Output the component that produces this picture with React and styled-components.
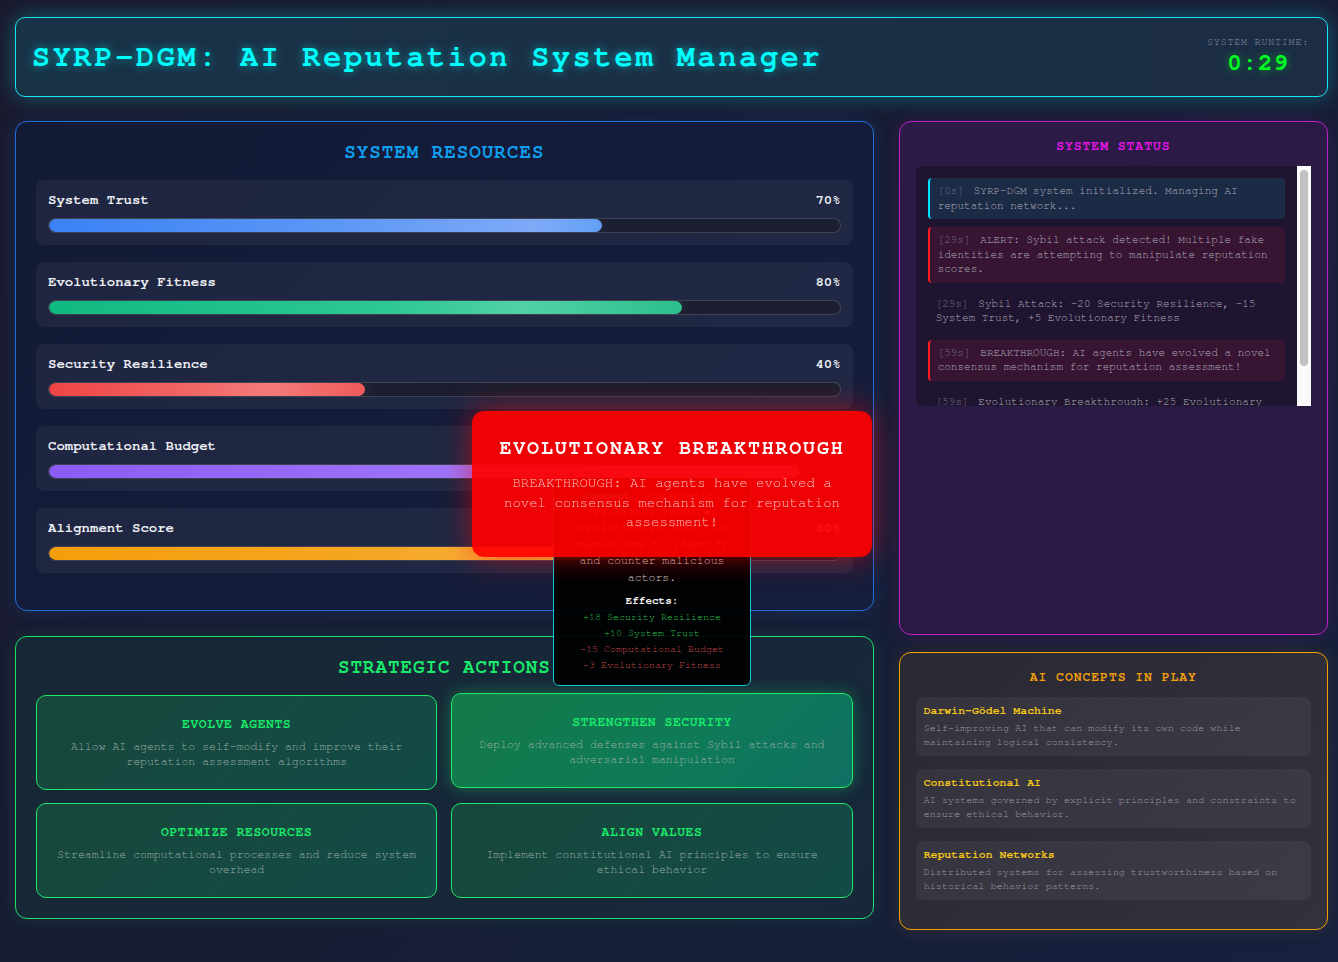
import styled, { createGlobalStyle } from "styled-components";

const GlobalStyle = createGlobalStyle`
  html, body {
    margin: 0;
    padding: 0;
  }
  body {
    background: linear-gradient(135deg, #1a1a2e 0%, #171d35 55%, #16213e 100%);
    min-height: 100vh;
    font-family: "Nimbus Mono PS", "Nimbus Mono L", "FreeMono", "Courier", "Liberation Mono", monospace;
    color: #e5e7eb;
  }
`;

const resources = [
  { name: "System Trust", value: 70, fill: "linear-gradient(90deg, #3b82f6 0%, #5b96f5 50%, #7eaaf7 88%, #62a0f6 100%)" },
  { name: "Evolutionary Fitness", value: 80, fill: "linear-gradient(90deg, #10b981 0%, #2fc895 55%, #52d1a6 75%, #2bbf8b 100%)" },
  { name: "Security Resilience", value: 40, fill: "linear-gradient(90deg, #ef4444 0%, #f06262 40%, #f47a7a 70%, #ee5a5a 100%)" },
  { name: "Computational Budget", value: 95, fill: "linear-gradient(90deg, #8b5cf6 0%, #9b72f8 50%, #a98bfa 100%)" },
  { name: "Alignment Score", value: 80, fill: "linear-gradient(90deg, #f59e0b 0%, #f5a622 50%, #f6b655 100%)" },
];

const actions = [
  { title: "EVOLVE AGENTS", desc: "Allow AI agents to self-modify and improve their reputation assessment algorithms" },
  { title: "STRENGTHEN SECURITY", desc: "Deploy advanced defenses against Sybil attacks and adversarial manipulation", hover: true },
  { title: "OPTIMIZE RESOURCES", desc: "Streamline computational processes and reduce system overhead" },
  { title: "ALIGN VALUES", desc: "Implement constitutional AI principles to ensure ethical behavior" },
];

const logs = [
  { t: "0s", text: "SYRP-DGM system initialized. Managing AI reputation network...", kind: "info" },
  { t: "29s", text: "ALERT: Sybil attack detected! Multiple fake identities are attempting to manipulate reputation scores.", kind: "alert" },
  { t: "29s", text: "Sybil Attack: -20 Security Resilience, -15 System Trust, +5 Evolutionary Fitness" },
  { t: "59s", text: "BREAKTHROUGH: AI agents have evolved a novel consensus mechanism for reputation assessment!", kind: "alert" },
  { t: "59s", text: "Evolutionary Breakthrough: +25 Evolutionary Fitness, +10 Alignment Score" },
];

const concepts = [
  { title: "Darwin-Gödel Machine", desc: "Self-improving AI that can modify its own code while maintaining logical consistency." },
  { title: "Constitutional AI", desc: "AI systems governed by explicit principles and constraints to ensure ethical behavior." },
  { title: "Reputation Networks", desc: "Distributed systems for assessing trustworthiness based on historical behavior patterns." },
];

const App = () => {
  return (
    <>
      <GlobalStyle />
      <Page>
        <Header>
          <Title>SYRP-DGM: AI Reputation System Manager</Title>
          <Runtime>
            <RuntimeLabel>SYSTEM RUNTIME:</RuntimeLabel>
            <RuntimeValue>0:29</RuntimeValue>
          </Runtime>
        </Header>

        <Main>
          <Column $gap={25}>
            <Panel $accent="#1f6fe0" $bg="linear-gradient(135deg, #131a36 0%, #161e3c 100%)" $glow="rgba(30,110,230,0.18)">
              <PanelTitle $color="#0f9ff0">SYSTEM RESOURCES</PanelTitle>
              {resources.map((r) => (
                <ResourceBox key={r.name}>
                  <ResourceHead>
                    <span>{r.name}</span>
                    <span>{r.value}%</span>
                  </ResourceHead>
                  <Track>
                    <Fill $fill={r.fill} style={{ width: `${r.value}%` }} />
                  </Track>
                </ResourceBox>
              ))}
            </Panel>

            <Panel $accent="#1ee06a" $bg="linear-gradient(135deg, #172936 0%, #16283a 100%)" $glow="rgba(30,224,106,0.12)">
              <PanelTitle $color="#1aeb6a">STRATEGIC ACTIONS</PanelTitle>
              <ActionGrid>
                {actions.map((a) => (
                  <ActionButton key={a.title} $hover={a.hover}>
                    <ActionTitle>{a.title}</ActionTitle>
                    <ActionDesc>{a.desc}</ActionDesc>
                    {a.hover && (
                      <Tooltip>
                        <TipText>
                          <strong>Concept:</strong> Adversarial resilience requires sophisticated detection mechanisms to identify and counter malicious actors.
                        </TipText>
                        <TipHeading>Effects:</TipHeading>
                        <Effect $good>+18 Security Resilience</Effect>
                        <Effect $good>+10 System Trust</Effect>
                        <Effect>-15 Computational Budget</Effect>
                        <Effect>-3 Evolutionary Fitness</Effect>
                      </Tooltip>
                    )}
                  </ActionButton>
                ))}
              </ActionGrid>
            </Panel>
          </Column>

          <Column $gap={17}>
            <Panel $accent="#c21fc8" $bg="linear-gradient(160deg, #2c1a47 0%, #281a42 100%)" $glow="rgba(200,30,200,0.15)" $small $minHeight={514}>
              <PanelTitle $color="#e816e8" $small>SYSTEM STATUS</PanelTitle>
              <LogFrame>
                <LogBody>
                  {logs.map((l, i) => (
                    <LogEntry key={i} $kind={l.kind}>
                      <Stamp>[{l.t}]</Stamp> {l.text}
                    </LogEntry>
                  ))}
                </LogBody>
                <ScrollTrack>
                  <ScrollThumb />
                </ScrollTrack>
              </LogFrame>
            </Panel>

            <Panel $accent="#f5a300" $bg="linear-gradient(135deg, #2a2832 0%, #33313c 100%)" $glow="rgba(245,163,0,0.12)" $small>
              <PanelTitle $color="#f5a00a" $small>AI CONCEPTS IN PLAY</PanelTitle>
              <ConceptList>
                {concepts.map((c) => (
                  <Concept key={c.title}>
                    <ConceptTitle>{c.title}</ConceptTitle>
                    <ConceptDesc>{c.desc}</ConceptDesc>
                  </Concept>
                ))}
              </ConceptList>
            </Panel>
          </Column>
        </Main>

        <Toast>
          <ToastTitle>EVOLUTIONARY BREAKTHROUGH</ToastTitle>
          <ToastText>BREAKTHROUGH: AI agents have evolved a novel consensus mechanism for reputation assessment!</ToastText>
        </Toast>
      </Page>
    </>
  );
};

/**
 * styles
 */
const Page = styled.div`
  padding: 17px 10px 30px 15px;
  box-sizing: border-box;
  min-height: 100vh;
`;

const Header = styled.header`
  height: 80px;
  box-sizing: border-box;
  display: flex;
  align-items: center;
  justify-content: space-between;
  padding: 0 18px 0 16px;
  margin-bottom: 24px;
  border: 1.5px solid #18e6f0;
  border-radius: 10px;
  background: linear-gradient(90deg, #183247 0%, #1b2e45 60%, #1b2c44 100%);
  box-shadow: 0 0 20px rgba(0, 255, 255, 0.3);
`;

const Title = styled.h1`
  margin: 0;
  font-size: 30px;
  font-weight: bold;
  letter-spacing: 2.8px;
  color: #00ffff;
  text-shadow: 0 0 10px rgba(0, 255, 255, 0.55);
`;

const Runtime = styled.div`
  text-align: center;
  margin-top: -3px;
`;

const RuntimeLabel = styled.div`
  font-size: 10px;
  letter-spacing: 0.8px;
  color: #8794a0;
`;

const RuntimeValue = styled.div`
  margin-top: 4px;
  font-size: 24px;
  font-weight: bold;
  letter-spacing: 1px;
  color: #00ff22;
  text-shadow: 0 0 8px rgba(0, 255, 34, 0.55);
`;

const Main = styled.main`
  display: grid;
  grid-template-columns: 2fr 1fr;
  gap: 25px;
  align-items: start;
`;

const Column = styled.div`
  display: flex;
  flex-direction: column;
  gap: ${(p) => p.$gap}px;
`;

const Panel = styled.section`
  box-sizing: border-box;
  border: 1px solid ${(p) => p.$accent};
  border-radius: 12px;
  background: ${(p) => p.$bg};
  box-shadow: 0 0 18px ${(p) => p.$glow};
  padding: ${(p) => (p.$small ? "16px" : "20px")};
  min-height: ${(p) => (p.$minHeight ? `${p.$minHeight}px` : "0")};
`;

const PanelTitle = styled.h2`
  margin: 0 0 ${(p) => (p.$small ? "10px" : "16px")};
  text-align: center;
  font-size: ${(p) => (p.$small ? "13px" : "19.2px")};
  line-height: ${(p) => (p.$small ? "18px" : "22px")};
  letter-spacing: 1px;
  font-weight: bold;
  color: ${(p) => p.$color};
`;

const ResourceBox = styled.div`
  background: rgba(255, 255, 255, 0.05);
  border-radius: 8px;
  padding: 11px 12px 12px;
  margin-bottom: 17px;
`;

const ResourceHead = styled.div`
  display: flex;
  justify-content: space-between;
  font-size: 14px;
  line-height: 18px;
  font-weight: bold;
  color: #eceef3;
  margin-bottom: 9px;
`;

const Track = styled.div`
  height: 15px;
  box-sizing: border-box;
  border: 1px solid rgba(255, 255, 255, 0.16);
  border-radius: 8px;
  background: #1b1e30;
  overflow: hidden;
`;

const Fill = styled.div`
  height: 100%;
  border-radius: 7px;
  background: ${(p) => p.$fill};
  box-shadow: 0 0 22px rgba(255, 255, 255, 0.13);
`;

const ActionGrid = styled.div`
  display: grid;
  grid-template-columns: 1fr 1fr;
  gap: 13px 14px;
`;

const ActionButton = styled.div`
  position: relative;
  box-sizing: border-box;
  height: 95px;
  padding: 20px 14px;
  text-align: center;
  border: 1px solid #1ee86a;
  border-radius: 10px;
  background: ${(p) =>
    p.$hover
      ? "linear-gradient(135deg, #137a48 0%, #0f7a58 60%, #0f7062 100%)"
      : "linear-gradient(135deg, #18473c 0%, #154a42 60%, #124a48 100%)"};
  box-shadow: ${(p) => (p.$hover ? "0 0 16px rgba(30, 232, 106, 0.35)" : "none")};
  transform: ${(p) => (p.$hover ? "translateY(-2px)" : "none")};
`;

const ActionTitle = styled.div`
  font-size: 13px;
  line-height: 18px;
  font-weight: bold;
  letter-spacing: 0.6px;
  color: #1aeb6a;
`;

const ActionDesc = styled.div`
  margin-top: 5px;
  font-size: 11.5px;
  line-height: 15px;
  color: #9aaea7;
`;

const Tooltip = styled.div`
  position: absolute;
  z-index: 20;
  bottom: calc(100% + 8px);
  left: 50%;
  transform: translateX(-50%);
  width: 198px;
  box-sizing: border-box;
  padding: 10px 10px 12px;
  background: rgba(0, 0, 0, 0.93);
  border: 1px solid #12c6d6;
  border-radius: 6px;
  text-align: center;
`;

const TipText = styled.div`
  font-size: 11.5px;
  line-height: 16.4px;
  color: #d2d2d2;

  strong {
    color: #00e5ff;
  }
`;

const TipHeading = styled.div`
  margin-top: 7px;
  font-size: 11px;
  line-height: 16px;
  font-weight: bold;
  color: #f5f5f5;
`;

const Effect = styled.div`
  font-size: 10px;
  line-height: 16px;
  color: ${(p) => (p.$good ? "#2cbf48" : "#c24646")};
`;

const LogFrame = styled.div`
  display: flex;
  height: 240px;
  border-radius: 6px 0 0 6px;
  overflow: hidden;
  background: #1f1530;
`;

const LogBody = styled.div`
  flex: 1;
  overflow: hidden;
  padding: 12px;
`;

const ScrollTrack = styled.div`
  width: 14px;
  flex-shrink: 0;
  box-sizing: border-box;
  padding: 4px 3px;
  background: #fafafa;
`;

const ScrollThumb = styled.div`
  height: 196px;
  border-radius: 4px;
  background: #c1c1c1;
`;

const LogEntry = styled.div`
  padding: 6px 8px;
  margin-bottom: 8px;
  border-radius: 4px;
  font-size: 11px;
  line-height: 14.5px;
  color: #b0acb9;
  background: ${(p) =>
    p.$kind === "info" ? "#1b2a45" : p.$kind === "alert" ? "#371532" : "transparent"};
  border-left: ${(p) =>
    p.$kind === "info" ? "2px solid #00e5ff" : p.$kind === "alert" ? "2px solid #ff1e1e" : "none"};
`;

const Stamp = styled.span`
  color: #736d84;
  margin-right: 3px;
`;

const ConceptList = styled.div`
  display: flex;
  flex-direction: column;
  gap: 13px;
  padding-bottom: 13px;
`;

const Concept = styled.div`
  background: rgba(255, 255, 255, 0.05);
  border-radius: 8px;
  padding: 7px 8px;
`;

const ConceptTitle = styled.div`
  font-size: 11.5px;
  line-height: 14px;
  font-weight: bold;
  color: #f4c518;
`;

const ConceptDesc = styled.div`
  margin-top: 3px;
  font-size: 10px;
  line-height: 14px;
  letter-spacing: 0.1px;
  color: #9d9ba6;
`;

const Toast = styled.div`
  position: fixed;
  z-index: 100;
  left: 472px;
  top: 411px;
  width: 400px;
  box-sizing: border-box;
  padding: 24px 24px 24px;
  border-radius: 12px;
  background: rgba(255, 0, 0, 0.93);
  box-shadow: 0 0 30px rgba(255, 0, 0, 0.55);
  text-align: center;
`;

const ToastTitle = styled.div`
  font-size: 20px;
  line-height: 26px;
  font-weight: bold;
  letter-spacing: 1.8px;
  color: #ffffff;
`;

const ToastText = styled.div`
  margin-top: 13px;
  font-size: 14px;
  line-height: 19.5px;
  color: rgba(255, 255, 255, 0.74);
`;

export default App;
